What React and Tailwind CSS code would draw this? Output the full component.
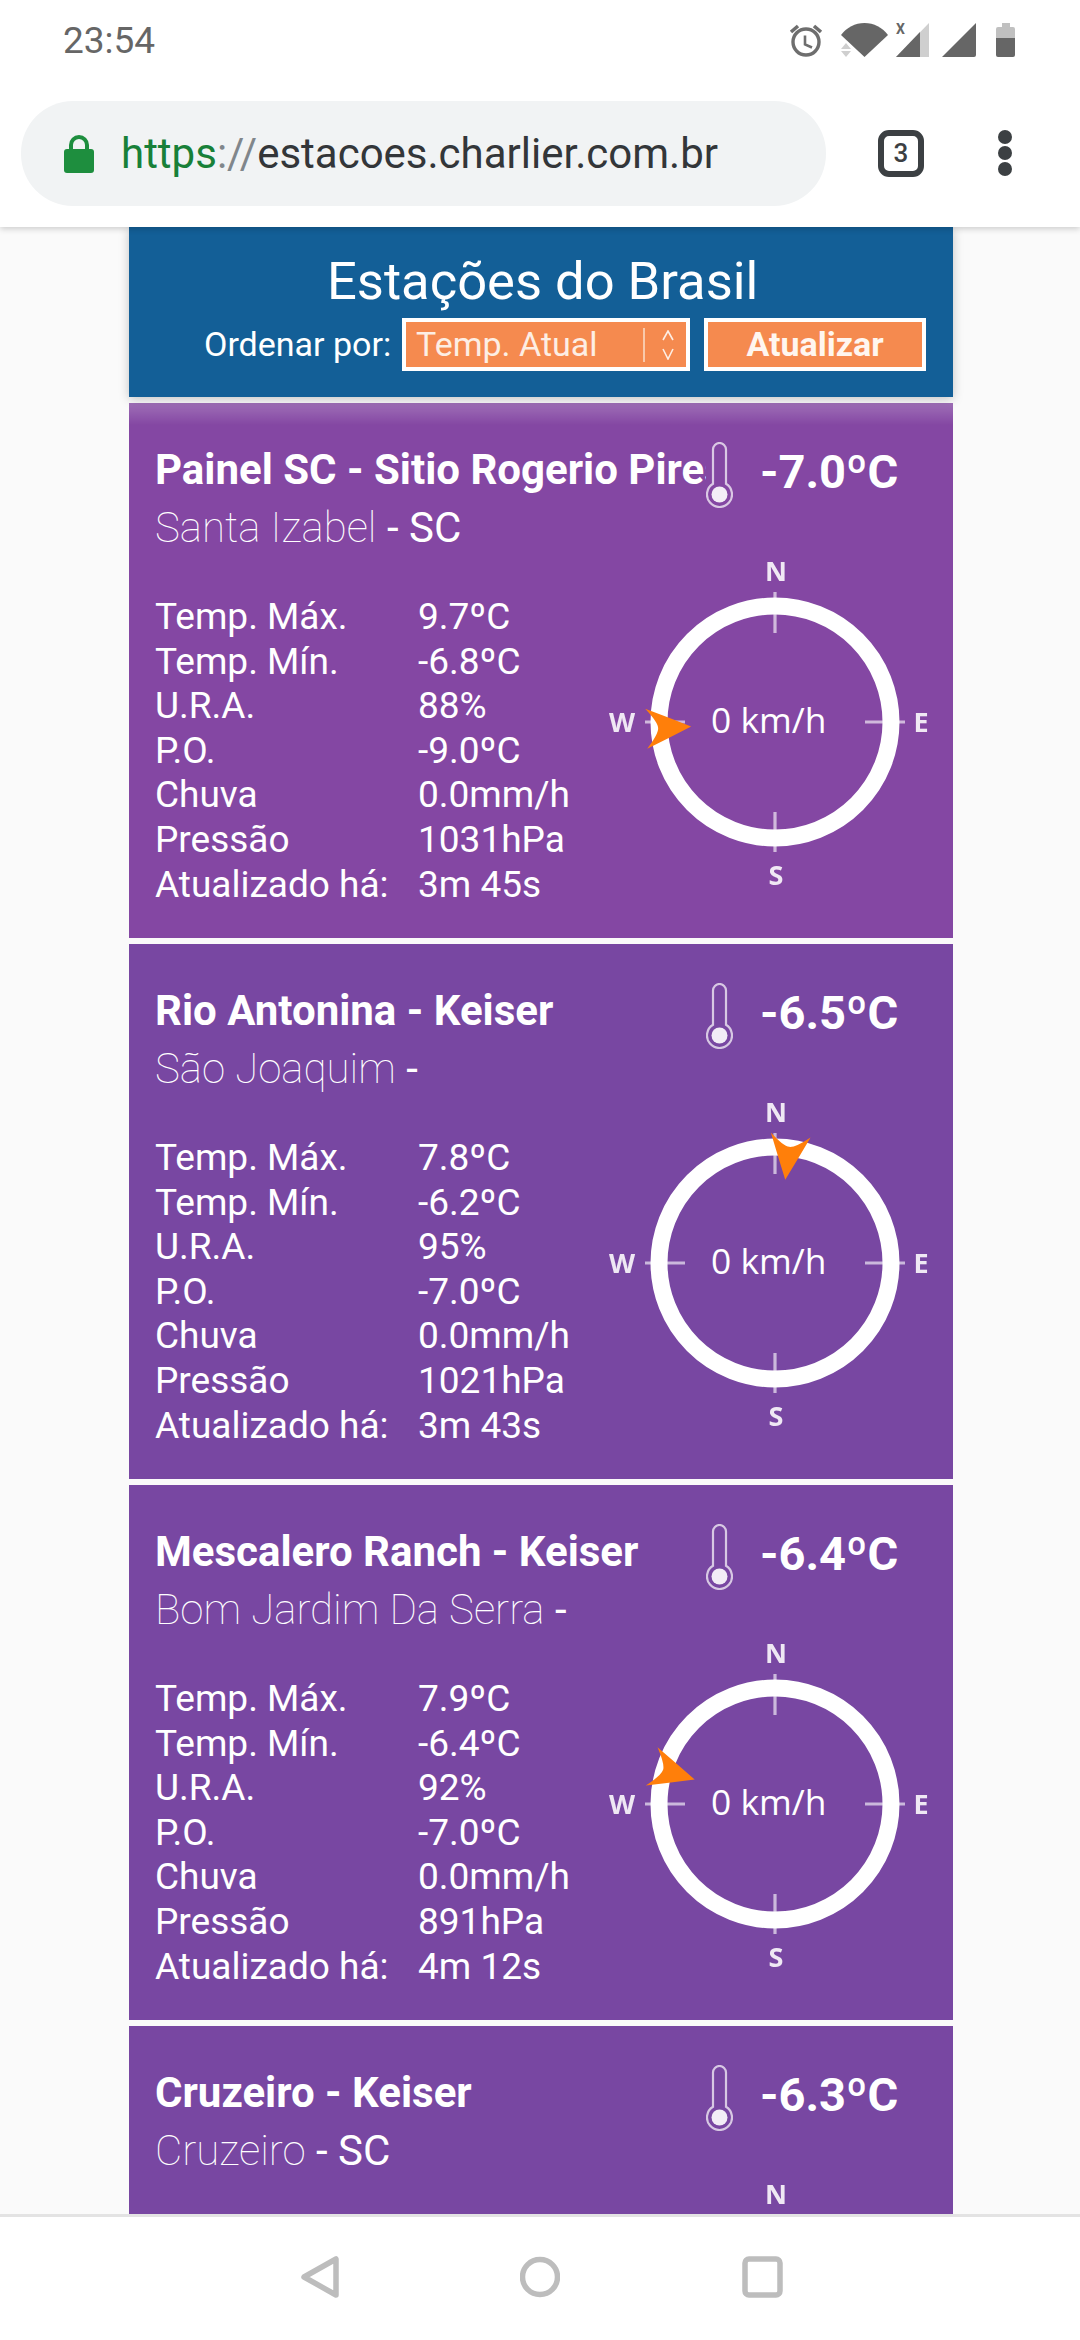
import React from "react";

const stations = [
  {
    name: "Painel SC - Sitio Rogerio Pires",
    city: "Santa Izabel",
    uf: "SC",
    temp: "-7.0ºC",
    angle: 267,
    bg: "bg-[#8447a3]",
    first: true,
    rows: [
      ["Temp. Máx.", "9.7ºC"],
      ["Temp. Mín.", "-6.8ºC"],
      ["U.R.A.", "88%"],
      ["P.O.", "-9.0ºC"],
      ["Chuva", "0.0mm/h"],
      ["Pressão", "1031hPa"],
      ["Atualizado há:", "3m 45s"],
    ],
  },
  {
    name: "Rio Antonina - Keiser",
    city: "São Joaquim",
    uf: "",
    temp: "-6.5ºC",
    angle: 7,
    bg: "bg-[#7847a2]",
    rows: [
      ["Temp. Máx.", "7.8ºC"],
      ["Temp. Mín.", "-6.2ºC"],
      ["U.R.A.", "95%"],
      ["P.O.", "-7.0ºC"],
      ["Chuva", "0.0mm/h"],
      ["Pressão", "1021hPa"],
      ["Atualizado há:", "3m 43s"],
    ],
  },
  {
    name: "Mescalero Ranch - Keiser",
    city: "Bom Jardim Da Serra",
    uf: "",
    temp: "-6.4ºC",
    angle: 287,
    bg: "bg-[#7847a2]",
    rows: [
      ["Temp. Máx.", "7.9ºC"],
      ["Temp. Mín.", "-6.4ºC"],
      ["U.R.A.", "92%"],
      ["P.O.", "-7.0ºC"],
      ["Chuva", "0.0mm/h"],
      ["Pressão", "891hPa"],
      ["Atualizado há:", "4m 12s"],
    ],
  },
  {
    name: "Cruzeiro - Keiser",
    city: "Cruzeiro",
    uf: "SC",
    temp: "-6.3ºC",
    angle: 0,
    bg: "bg-[#7847a2]",
    rows: [],
    partial: true,
  },
];

function StatusIcons() {
  return (
    <svg width="227" height="35" viewBox="0 0 227 35" className="block overflow-visible">
      <g fill="none" stroke="#6e6e6e" strokeWidth="3.4">
        <circle cx="17" cy="19" r="13" />
        <path d="M16 12.5V21.5L23 24.5" strokeWidth="2.6" />
        <path d="M2 9L9 3M32 9L25 3" strokeWidth="3.6" />
      </g>
      <path d="M52 12A29 29 0 0 1 99 12L75.5 34Z" fill="#666666" />
      <path d="M57 20L52 26H62ZM57 34L52 28H62Z" fill="#cfcfcf" />
      <text x="107" y="11" fontSize="14" fontWeight="700" fontFamily="Roboto, sans-serif" fill="#666666">X</text>
      <path d="M107 34L140 0V34Z" fill="#cfcfcf" />
      <path d="M107 34L131 9V34Z" fill="#666666" />
      <path d="M153 34L187 0V32a2 2 0 0 1-2 2Z" fill="#666666" />
      <path d="M207 15V6a2 2 0 0 1 2-2h4V0h8v4h3a2 2 0 0 1 2 2v9Z" fill="#c0c0c0" />
      <path d="M207 15h19v17a2 2 0 0 1-2 2h-15a2 2 0 0 1-2-2Z" fill="#666666" />
    </svg>
  );
}

function Toolbar() {
  return (
    <div className="relative z-10 shrink-0 bg-white shadow-[0_2px_6px_rgba(0,0,0,0.18)]">
      <div className="flex h-[101px] items-start justify-between pt-[23px] pr-[64px] pl-[63px]">
        <span className="mt-[1px] text-[37px] leading-[34px] text-[#666666] font-['Roboto',sans-serif]">23:54</span>
        <StatusIcons />
      </div>
      <div className="flex h-[126px] items-start pl-[21px]">
        <div className="flex h-[105px] w-[805px] items-center rounded-[52px] bg-[#f1f3f4] pl-[43px]">
          <svg width="30" height="38" viewBox="0 0 30 38" className="block shrink-0">
            <path d="M7 16V10a8 8 0 0 1 16 0v6" fill="none" stroke="#1e8e3e" strokeWidth="4" />
            <rect x="0" y="14" width="30" height="24" rx="3" fill="#1e8e3e" />
          </svg>
          <span className="ml-[27px] text-[42px] leading-[50px] whitespace-nowrap font-['Roboto',sans-serif] text-[#333639]">
            <span className="text-[#188038]">https</span>
            <span className="text-[#80868b]">://</span>
            estacoes.charlier.com.br
          </span>
        </div>
        <div className="mt-[29px] ml-[52px] flex h-[47px] w-[46px] items-center justify-center rounded-[11px] border-[6px] border-[#3c4043] text-[26px] font-medium text-[#3c4043] font-['Roboto',sans-serif]">
          3
        </div>
        <div className="mt-[29px] ml-[74px] flex flex-col gap-[2px]">
          <span className="block h-[14px] w-[14px] rounded-full bg-[#3c4043]" />
          <span className="block h-[14px] w-[14px] rounded-full bg-[#3c4043]" />
          <span className="block h-[14px] w-[14px] rounded-full bg-[#3c4043]" />
        </div>
      </div>
    </div>
  );
}

function Header() {
  return (
    <div className="relative z-[1] mb-[6px] h-[170px] bg-[#135f97] pt-[24px] text-white shadow-[0_2px_10px_rgba(0,0,0,0.22)] font-['Roboto',sans-serif]">
      <div className="h-[62px] pl-[198px] text-[52.5px] leading-[60px] whitespace-nowrap">Estações do Brasil</div>
      <div className="mt-[5px] flex items-start pl-[75px]">
        <span className="w-[198px] text-[34px] leading-[53px] whitespace-nowrap">Ordenar por:</span>
        <div className="flex h-[53px] w-[288px] items-center border-[4px] border-white bg-[#f58a4f] pl-[10px] text-[#fdeee4]">
          <span className="w-[227px] text-[34px] leading-[45px] whitespace-nowrap">Temp. Atual</span>
          <span className="block h-[34px] w-[2px] bg-[#f9c9ab]" />
          <svg width="14" height="30" viewBox="0 0 14 30" className="ml-[16px] block">
            <path d="M2 10L7 1l5 9M2 19l5 10 5-10" fill="none" stroke="#fdeee4" strokeWidth="1.6" />
          </svg>
        </div>
        <button className="ml-[14px] h-[53px] w-[222px] border-[4px] border-white bg-[#f58a4f] text-center text-[34px] leading-[43px] font-bold text-[#fff6ef]">
          Atualizar
        </button>
      </div>
    </div>
  );
}

function Thermometer() {
  return (
    <svg width="27" height="66" viewBox="0 0 27 66" className="block shrink-0">
      <path
        d="M7 41.8V7.5a6.5 6.5 0 0 1 13 0V41.8a12.5 12.5 0 1 1-13 0Z"
        fill="none"
        stroke="#ffffff"
        strokeOpacity="0.7"
        strokeWidth="2.2"
      />
      <circle cx="13.5" cy="52.5" r="8" fill="#ffffff" fillOpacity="0.9" />
    </svg>
  );
}

function Compass({ angle, partial }) {
  const font = "'Open Sans', sans-serif";
  return (
    <div className="relative h-[340px] w-[340px] shrink-0">
      <svg width="340" height="340" viewBox="-170 -170 340 340" className="block blur-[0.5px]">
        <g stroke="#ffffff" strokeOpacity="0.62" strokeWidth="3.2">
          <path d="M0 -130V-89M0 130V90M-130 0H-90M130 0H90" />
        </g>
        <circle cx="0" cy="0" r="116" fill="none" stroke="#ffffff" strokeWidth="17" />
        <g fontFamily={font} fontWeight="700" fontSize="27" fill="#ffffff" fillOpacity="0.88" textAnchor="middle">
          <text x="1" y="-141">N</text>
          {!partial && (
            <>
              <text x="1" y="163">S</text>
              <text x="-153" y="10">W</text>
              <text x="146" y="10">E</text>
            </>
          )}
        </g>
        {!partial && (
          <g transform={`rotate(${angle})`}>
            <path d="M-20 -129Q-6 -117 0 -117Q6 -117 20 -129Q10 -106 0 -84Q-10 -106 -20 -129Z" fill="#ff7f0a" />
          </g>
        )}
      </svg>
      {!partial && (
        <span className="absolute top-[143px] left-[106px] text-[35.4px] leading-[48px] whitespace-nowrap text-white font-['Open_Sans',sans-serif]">
          0 km/h
        </span>
      )}
    </div>
  );
}

function Card({ s }) {
  return (
    <div className={`relative mb-[6px] h-[535px] overflow-hidden font-['Roboto',sans-serif] text-white ${s.bg}`}>
      {s.first && <div className="absolute inset-x-0 top-0 h-[22px] bg-gradient-to-b from-[#ffffff38] to-transparent" />}
      <div className="flex h-[105px] items-start pt-[39px] pl-[26px]">
        <div className="h-[56px] w-[551px] overflow-hidden text-[42px] leading-[56px] font-bold whitespace-nowrap">{s.name}</div>
        <Thermometer />
        <div className="mt-[-3px] ml-[27px] text-[47px] leading-[66px] font-bold whitespace-nowrap">{s.temp}</div>
      </div>
      <div className="flex items-start pl-[26px]">
        <div className="w-[450px] shrink-0">
          <div className="mt-[-3px] text-[42px] leading-[46px] whitespace-nowrap">
            <span className="font-[100]">{s.city}</span>
            <span> - {s.uf}</span>
          </div>
          <div className="mt-[44px] grid grid-cols-[263px_1fr] text-[37px] leading-[44.6px]">
            {s.rows.map(([k, v]) => (
              <React.Fragment key={k}>
                <div className="whitespace-nowrap">{k}</div>
                <div className="whitespace-nowrap">{v}</div>
              </React.Fragment>
            ))}
          </div>
        </div>
        <div className="mt-[44px]">
          <Compass angle={s.angle} partial={s.partial} />
        </div>
      </div>
    </div>
  );
}

function NavBar() {
  return (
    <div className="relative z-10 flex h-[126px] shrink-0 items-start border-t-[3px] border-[#e3e3e3] bg-white pt-[39px] pl-[301px]">
      <svg width="38" height="42" viewBox="0 0 38 42" className="block">
        <path d="M35 3V39L3 21Z" fill="none" stroke="#bdbdbd" strokeWidth="5.5" strokeLinejoin="round" />
      </svg>
      <svg width="40" height="42" viewBox="0 0 40 42" className="ml-[181px] block">
        <circle cx="20" cy="21" r="17.5" fill="none" stroke="#bdbdbd" strokeWidth="5.5" />
      </svg>
      <svg width="41" height="42" viewBox="0 0 41 42" className="ml-[182px] block">
        <rect x="3" y="3" width="35" height="36" rx="4" fill="none" stroke="#bdbdbd" strokeWidth="5.5" />
      </svg>
    </div>
  );
}

export default function App() {
  return (
    <div className="flex h-[2340px] w-[1080px] flex-col overflow-hidden bg-[#fafafa]">
      <Toolbar />
      <div className="min-h-0 flex-1 overflow-hidden pr-[127px] pl-[129px]">
        <Header />
        {stations.map((s) => (
          <Card key={s.name} s={s} />
        ))}
      </div>
      <NavBar />
    </div>
  );
}
